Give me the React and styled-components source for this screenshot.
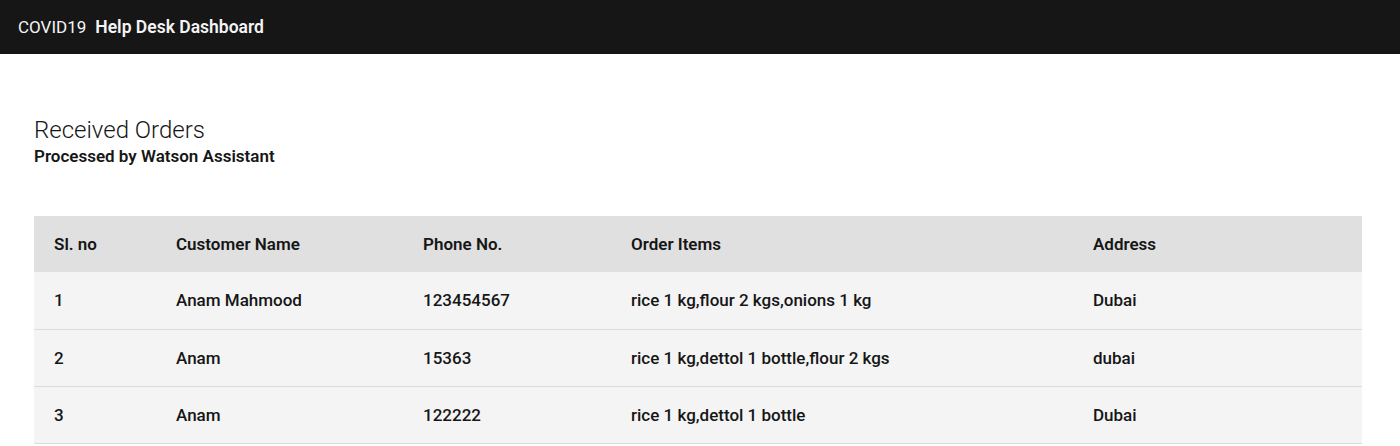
import React from "react";
import styled, { createGlobalStyle } from "styled-components";

const Global = createGlobalStyle`
  *, *::before, *::after { box-sizing: border-box; }
  html, body { margin: 0; padding: 0; background: #ffffff; }
  body { font-family: Roboto, "Noto Sans", sans-serif; color: #161616; }
`;

const Header = styled.header`
  height: 54px;
  background: #161616;
  display: flex;
  align-items: center;
  padding-left: 18px;
  color: #f4f4f4;
  font-size: 17px;
  padding-bottom: 1px;
`;

const Prefix = styled.span`
  font-weight: 400;
  margin-right: 9px;
`;

const Name = styled.span`
  font-weight: 600;
  font-size: 17.5px;
`;

const Main = styled.main`
  padding: 62px 38px 0 34px;
`;

const Title = styled.h1`
  margin: 0;
  font-size: 24px;
  font-weight: 300;
  line-height: 29px;
`;

const Subtitle = styled.h2`
  margin: 0;
  font-size: 17px;
  font-weight: 600;
  line-height: 22px;
`;

const Table = styled.table`
  width: 100%;
  margin-top: 49px;
  border-collapse: collapse;
  table-layout: fixed;
  font-size: 17px;
`;

const Th = styled.th`
  background: #e0e0e0;
  height: 56px;
  padding: 0 20px;
  text-align: left;
  font-weight: 600;
  width: ${(p) => p.$w}px;
`;

const Tr = styled.tr`
  background: #f4f4f4;
  border-bottom: 1px solid #dcdcdc;
`;

const Td = styled.td`
  height: 57px;
  padding: 0 20px;
  font-weight: 500;
  color: #161616;
`;

const cols = [
  { label: "Sl. no", w: 122 },
  { label: "Customer Name", w: 247 },
  { label: "Phone No.", w: 208 },
  { label: "Order Items", w: 462 },
  { label: "Address", w: 289 },
];

const rows = [
  ["1", "Anam Mahmood", "123454567", "rice 1 kg,flour 2 kgs,onions 1 kg", "Dubai"],
  ["2", "Anam", "15363", "rice 1 kg,dettol 1 bottle,flour 2 kgs", "dubai"],
  ["3", "Anam", "122222", "rice 1 kg,dettol 1 bottle", "Dubai"],
];

export default function App() {
  return (
    <>
      <Global />
      <Header>
        <Prefix>COVID19</Prefix>
        <Name>Help Desk Dashboard</Name>
      </Header>
      <Main>
        <Title>Received Orders</Title>
        <Subtitle>Processed by Watson Assistant</Subtitle>
        <Table>
          <thead>
            <tr>
              {cols.map((c) => (
                <Th key={c.label} $w={c.w}>{c.label}</Th>
              ))}
            </tr>
          </thead>
          <tbody>
            {rows.map((r) => (
              <Tr key={r[0]}>
                {r.map((v, i) => (
                  <Td key={i}>{v}</Td>
                ))}
              </Tr>
            ))}
          </tbody>
        </Table>
      </Main>
    </>
  );
}
